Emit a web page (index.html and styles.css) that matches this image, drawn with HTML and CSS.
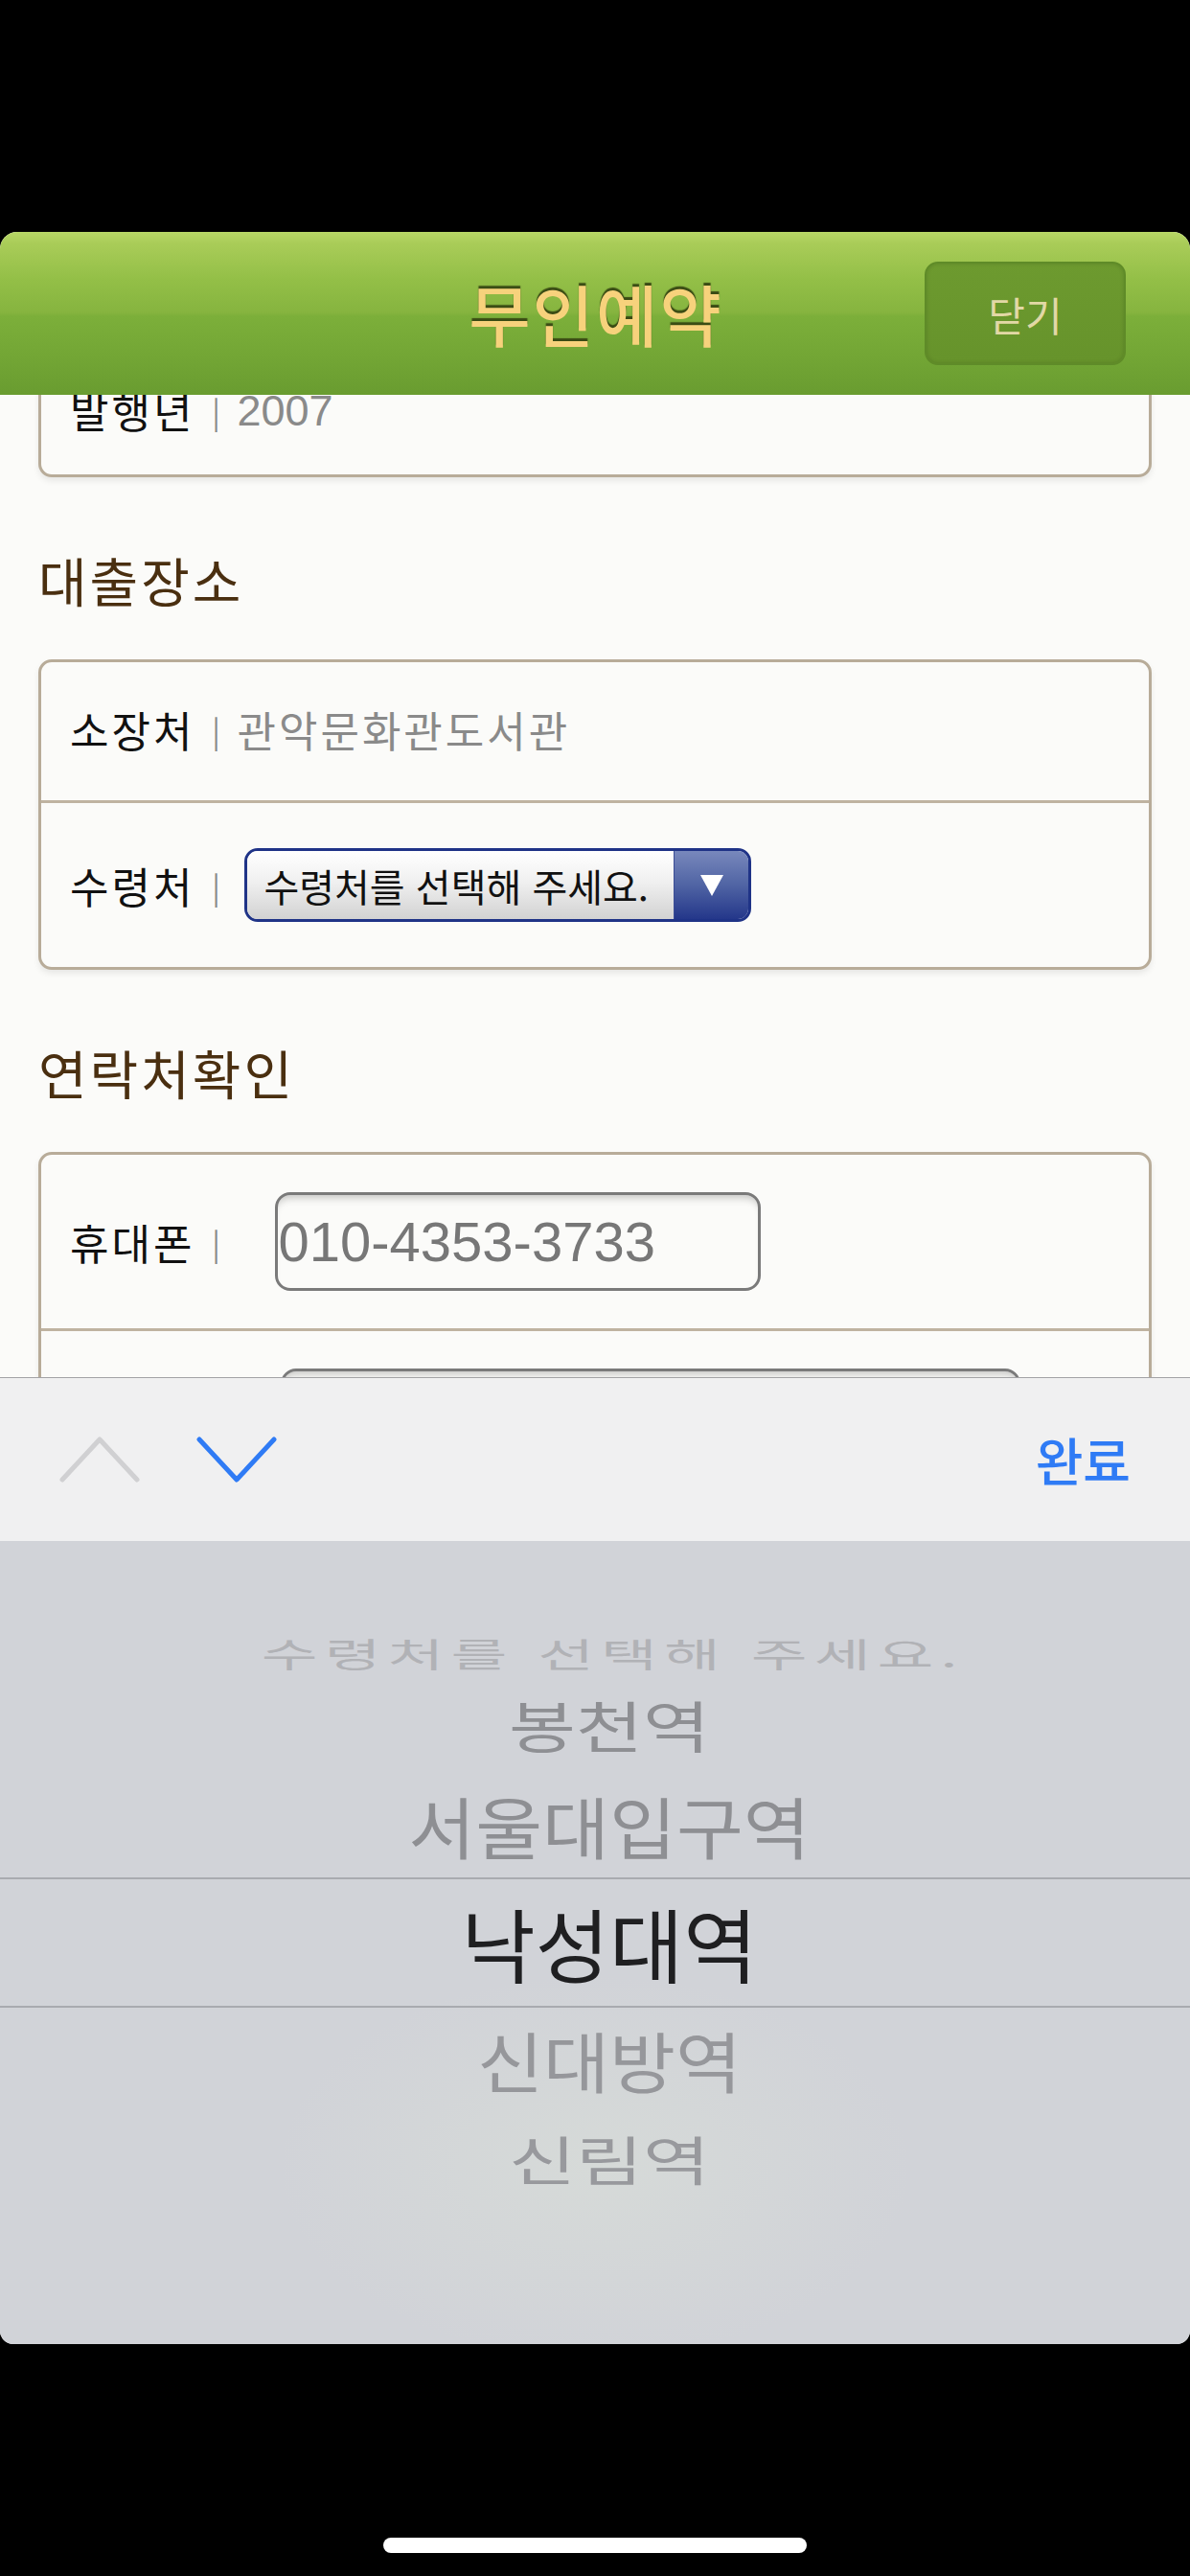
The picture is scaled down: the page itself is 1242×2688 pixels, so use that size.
FILE: index.html
```html
<!DOCTYPE html>
<html lang="ko">
<head>
<meta charset="utf-8">
<title>무인예약</title>
<link rel="stylesheet" href="styles.css">
</head>
<body>
<div class="device">
  <div class="status-area"></div>
  <div class="sheet">
    <header class="appbar">
      <div class="appbar-side"></div>
      <h1 class="appbar-title">무인예약</h1>
      <div class="appbar-side appbar-right"><button class="close-btn" type="button">닫기</button></div>
    </header>
    <main class="viewport">
      <div class="scroll">
        <section class="card card-top">
          <div class="row row-short"><span class="label">발행년</span><span class="sep">|</span><span class="value value-num">2007</span></div>
        </section>
        <h2 class="section-title">대출장소</h2>
        <section class="card">
          <div class="row row-a"><span class="label">소장처</span><span class="sep">|</span><span class="value">관악문화관도서관</span></div>
          <div class="row row-b"><span class="label">수령처</span><span class="sep">|</span>
            <div class="select">
              <span class="select-text">수령처를 선택해 주세요.</span>
              <span class="select-arrow"><svg width="26" height="24" viewBox="0 0 26 24"><polygon points="1,1 25,1 13,23" fill="#ffffff"/></svg></span>
            </div>
          </div>
        </section>
        <h2 class="section-title">연락처확인</h2>
        <section class="card">
          <div class="row row-c"><span class="label">휴대폰</span><span class="sep">|</span><div class="field field-phone">010-4353-3733</div></div>
          <div class="row row-c row-div"><div class="field field-wide"></div></div>
        </section>
      </div>
    </main>
    <div class="kb-toolbar">
      <svg class="chev" width="86" height="50" viewBox="0 0 86 50"><polyline points="4,46 43,4 82,46" fill="none" stroke="#d0d0d2" stroke-width="5" stroke-linecap="round" stroke-linejoin="round"/></svg>
      <svg class="chev chev-down" width="84" height="50" viewBox="0 0 84 50"><polyline points="3,4 42,46 81,4" fill="none" stroke="#2f7bf5" stroke-width="5" stroke-linecap="round" stroke-linejoin="round"/></svg>
      <span class="done">완료</span>
    </div>
    <div class="picker">
      <div class="opt opt-far"><span>수령처를 선택해 주세요.</span></div>
      <div class="opt opt-n1"><span>봉천역</span></div>
      <div class="opt opt-n2"><span>서울대입구역</span></div>
      <div class="opt opt-sel"><span>낙성대역</span></div>
      <div class="opt opt-n3"><span>신대방역</span></div>
      <div class="opt opt-n4"><span>신림역</span></div>
    </div>
  </div>
  <div class="home-area"><div class="home-indicator"></div></div>
</div>
</body>
</html>
```

FILE: styles.css
```css
* { box-sizing: border-box; }
html, body { margin: 0; padding: 0; }
body {
  background: #000;
  width: 1242px;
  height: 2688px;
  overflow: hidden;
  font-family: "Noto Sans CJK KR", "Noto Sans", sans-serif;
}
.device { display: flex; flex-direction: column; height: 2688px; }
.status-area { height: 242px; flex: none; }

.sheet {
  height: 2204px;
  flex: none;
  display: flex;
  flex-direction: column;
  border-radius: 18px 18px 14px 14px;
  overflow: hidden;
  background: #fbfbf9;
}

/* header */
.appbar {
  height: 170px;
  flex: none;
  display: grid;
  grid-template-columns: 1fr auto 1fr;
  align-items: center;
  background: linear-gradient(to bottom,
    #b8d766 0px, #a9cc58 12px, #93bf47 50px, #86b43f 84px,
    #7caf3a 88px, #73a635 130px, #699c30 170px);
}
.appbar-title {
  margin: 0;
  font-size: 70px;
  font-weight: 500;
  letter-spacing: 2px;
  padding-left: 2px;
  line-height: 1;
  color: #f7d27c;
  text-shadow: 0 -3px 1px #3a4b14;
}
.appbar-right { display: flex; justify-content: flex-end; padding-right: 67px; }
.close-btn {
  width: 210px;
  height: 108px;
  border-radius: 14px;
  border: 2px solid #5f8b28;
  background: linear-gradient(to bottom, #6d9a2f, #66932b);
  box-shadow: inset 0 0 4px rgba(0,0,0,0.15);
  font-family: "Noto Sans CJK KR", sans-serif;
  font-size: 42px;
  color: #e2d8a6;
  padding: 0;
}

/* content */
.viewport { height: 1025px; flex: none; overflow: hidden; background: #fbfbf9; }
.scroll { padding: 0 40px; }
.card {
  border: 3px solid #b8ac99;
  border-radius: 14px;
  background: #fbfbf9;
  box-shadow: 0 4px 6px rgba(0,0,0,0.08);
  display: flex;
  flex-direction: column;
}
.card-top { margin-top: -54px; }
.row {
  display: flex;
  align-items: center;
  padding-left: 30px;
  font-size: 44px;
  letter-spacing: 3px;
  line-height: 1;
}
.row-short { height: 134px; }
.row-a { height: 144px; padding-bottom: 4px; }
.row-b { height: 174px; border-top: 3px solid #bfb3a1; }
.row-c { height: 181px; }
.row-div { height: 184px; border-top: 3px solid #bfb3a1; }
.label { color: #111; }
.sep {
  display: inline-block;
  width: 44px;
  text-align: center;
  letter-spacing: 0;
  color: #8a8a8a;
  font-size: 32px;
}
.value { color: #8a8a8a; }
.value-num {
  font-family: "Liberation Sans", Arial, sans-serif;
  letter-spacing: 0;
  font-size: 45px;
}

.section-title {
  margin: 66px 0 44px;
  font-size: 55px;
  letter-spacing: 3px;
  font-weight: 400;
  line-height: 80px;
  color: #4a2f10;
}

.select {
  margin-left: 8px;
  width: 529px;
  height: 77px;
  border: 3px solid #1f3387;
  border-radius: 14px;
  overflow: hidden;
  display: flex;
  letter-spacing: 0;
}
.select-text {
  flex: 1;
  display: flex;
  align-items: center;
  padding-left: 17px;
  font-size: 40px;
  color: #111;
  background: linear-gradient(to bottom, #ffffff, #f0f0f0 45%, #d2d2d2);
}
.select-arrow {
  width: 78px;
  display: flex;
  align-items: center;
  justify-content: center;
  background: linear-gradient(to bottom, #7888bc, #5064a4 50%, #24378a);
  border-left: 1px solid #3b4d95;
}

.field {
  height: 103px;
  border: 3px solid #7a7a7a;
  border-radius: 16px;
  background: #fbfbf9;
  box-shadow: inset 0 9px 8px -6px rgba(0,0,0,0.22);
}
.field-phone {
  margin-left: 40px;
  width: 507px;
  font-family: "Liberation Sans", Arial, sans-serif;
  font-size: 58px;
  letter-spacing: 0;
  line-height: 97px;
  color: #777;
}
.field-wide { margin-left: 220px; width: 772px; }

/* keyboard accessory */
.kb-toolbar {
  height: 171px;
  flex: none;
  display: flex;
  align-items: center;
  gap: 58px;
  padding: 0 62px 0 61px;
  background: #f0f0f1;
  border-top: 1px solid #a2a2a5;
}
.done {
  margin-left: auto;
  font-size: 54px;
  font-weight: 500;
  color: #2f7bf5;
  line-height: 1;
}

/* picker */
.picker {
  flex: 1;
  display: flex;
  flex-direction: column;
  padding-top: 82px;
  background:
    radial-gradient(ellipse 330px 200px at 50% 78%, rgba(214,218,216,1), rgba(209,211,216,0)),
    #d1d3d8;
}
.opt {
  display: flex;
  align-items: center;
  justify-content: center;
  padding-left: 30px;
  line-height: 1;
  flex: none;
}
.opt span { display: block; }
.opt-far { height: 70px; font-size: 64px; letter-spacing: 7px; color: #b1b2b6; }
.opt-far span { transform: scaleY(0.55); padding-left: 7px; }
.opt-n1 { height: 78px; font-size: 76px; color: #8e8f93; }
.opt-n1 span { transform: scaleY(0.76); }
.opt-n2 { height: 121px; padding-top: 12px; font-size: 76px; color: #8e8f93; }
.opt-n2 span { transform: scaleY(0.92); }
.opt-sel {
  height: 136px;
  border-top: 2px solid #a9abb0;
  border-bottom: 2px solid #a9abb0;
  font-size: 84px;
  color: #1f1f21;
}
.opt-n3 { height: 106px; font-size: 75px; color: #96979b; }
.opt-n3 span { transform: scaleY(0.93); }
.opt-n4 { height: 100px; font-size: 76px; color: #98999d; }
.opt-n4 span { transform: scaleY(0.72); }

/* home indicator */
.home-area {
  flex: 1;
  display: flex;
  justify-content: center;
  padding-top: 202px;
}
.home-indicator {
  width: 442px;
  height: 16px;
  border-radius: 8px;
  background: #fff;
}
```
